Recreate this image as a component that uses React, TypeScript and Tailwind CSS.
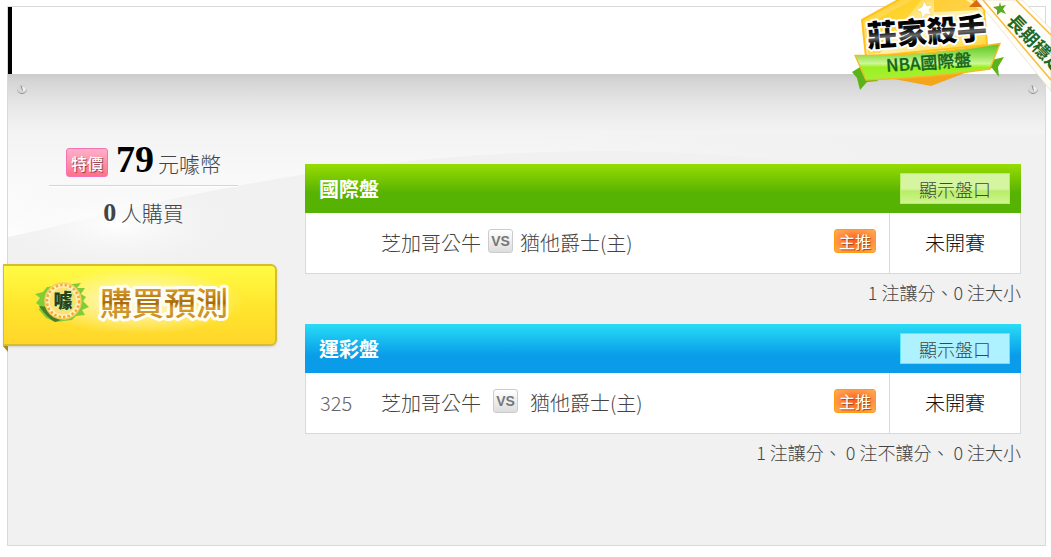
import React from 'react';

interface Match {
  code?: string;
  away: string;
  home: string;
  status: string;
}

interface Board {
  title: string;
  tone: 'green' | 'blue';
  matches: Match[];
  summary: string;
}

const boards: Board[] = [
  {
    title: '國際盤',
    tone: 'green',
    matches: [{ away: '芝加哥公牛', home: '猶他爵士(主)', status: '未開賽' }],
    summary: '1 注讓分、0 注大小',
  },
  {
    title: '運彩盤',
    tone: 'blue',
    matches: [{ code: '325', away: '芝加哥公牛', home: '猶他爵士(主)', status: '未開賽' }],
    summary: '1 注讓分、 0 注不讓分、 0 注大小',
  },
];

const tones = {
  green: {
    header: 'bg-linear-to-b from-[#96dc00] via-[#56b203] via-60% to-[#56b203]',
    button: 'border-[#b9ec68] bg-linear-to-b from-[#d5f5a0] from-50% via-[#b9ee68] via-60% to-[#cdf58c]',
    vs: 'mx-[7px]',
  },
  blue: {
    header: 'bg-linear-to-b from-[#2adcf5] via-[#0a9ce9] via-65% to-[#0a9ce9]',
    button: 'border-[#5eeaf4] bg-[#aef1ff]',
    vs: 'mx-3',
  },
};

function Rivet() {
  return (
    <svg viewBox="0 0 12 12" className="h-3 w-3" aria-hidden="true">
      <circle cx="6" cy="5.500" r="5" fill="#d6d6d6" />
      <path d="M1 5a5 5 0 0 0 10 0c-1 3-2.500 4-5 4s-4-1-5-4z" fill="#8f8f8f" />
      <circle cx="7.500" cy="5" r="2" fill="#efefef" />
      <path d="M5 1.500l1.500 5" stroke="#8a8a8a" strokeWidth="1" />
    </svg>
  );
}

function Gloss() {
  return (
    <svg viewBox="0 0 1037 200" preserveAspectRatio="none" className="absolute inset-x-0 top-0 h-[200px] w-full" aria-hidden="true">
      <defs>
        <linearGradient id="glossFade" gradientUnits="userSpaceOnUse" x1="0" y1="0" x2="0" y2="163">
          <stop offset="0" stopColor="#cbcbcb" />
          <stop offset="0.05" stopColor="#d6d6d6" />
          <stop offset="0.2" stopColor="#e8e8e8" />
          <stop offset="0.35" stopColor="#f3f3f3" />
          <stop offset="0.6" stopColor="#f8f8f8" />
          <stop offset="1" stopColor="#ffffff" />
        </linearGradient>
        <linearGradient id="glossEdge" x1="0" y1="0" x2="1" y2="0">
          <stop offset="0.5" stopColor="#f1f1f1" stopOpacity="0" />
          <stop offset="0.85" stopColor="#f1f1f1" />
        </linearGradient>
        <radialGradient id="glossSpot">
          <stop offset="0" stopColor="#ffffff" />
          <stop offset="1" stopColor="#f1f1f1" stopOpacity="0" />
        </radialGradient>
      </defs>
      <path d="M0 0H1037V130C900 100 760 77 595 77C300 78 100 143 0 163z" fill="url(#glossFade)" />
      <path d="M0 60H1037V135H0z" fill="url(#glossEdge)" />
      <ellipse cx="110" cy="150" rx="130" ry="50" fill="url(#glossSpot)" />
    </svg>
  );
}

function TitleBadge() {
  return (
    <svg viewBox="0 0 201 92" className="absolute top-0 right-0 h-[92px] w-[201px]" role="img" aria-label="莊家殺手 NBA國際盤">
      <defs>
        <linearGradient id="shield" x1="0" y1="0" x2="1" y2="1">
          <stop offset="0" stopColor="#ffbf00" />
          <stop offset="0.2" stopColor="#ffd84a" />
          <stop offset="0.5" stopColor="#fff3b8" />
          <stop offset="1" stopColor="#ffd21f" />
        </linearGradient>
        <linearGradient id="banner" x1="0" y1="0" x2="0" y2="1">
          <stop offset="0" stopColor="#58c322" />
          <stop offset="0.35" stopColor="#9be45c" />
          <stop offset="0.55" stopColor="#cdf797" />
          <stop offset="0.65" stopColor="#9af01e" />
          <stop offset="1" stopColor="#a8f03a" />
        </linearGradient>
        <linearGradient id="ink" x1="0" y1="0" x2="0" y2="1">
          <stop offset="0.3" stopColor="#000000" />
          <stop offset="0.5" stopColor="#1a1a1a" />
          <stop offset="0.6" stopColor="#6a6a6a" />
          <stop offset="0.75" stopColor="#000000" />
        </linearGradient>
      </defs>
      <path d="M2 72l13-8 13 17-11 1-7 8-3-12z" fill="#5bb31a" />
      <path d="M154 57l-12 3-6 10 6-2 7 9-1-10z" fill="#5bb31a" />
      <path d="M12 20L50-1h72l12 10 3 36-121 12z" fill="url(#shield)" stroke="#ffc21c" strokeWidth="2" />
      <path d="M15 26L62 0h9L30 53 18 54z" fill="#ffcf1c" opacity="0.75" />
      <path d="M84 0h32l14 10-46 2z" fill="#ffc928" opacity="0.8" />
      <path d="M33 77L120 71 81 86z" fill="#f3a51c" />
      <path d="M74 1l3 5 6-1-4 5 3 5-6-1-4 4-1-6-5-2 6-3z" fill="#ffffff" stroke="#f7cc60" strokeWidth="0.6" />
      <path d="M5 55.500Q80 56 150 43.500L140 69Q78 78 16 80z" fill="url(#banner)" stroke="#f6ba24" strokeWidth="1.300" />
      <g transform="rotate(-4 76 35)" fontFamily="'Noto Sans CJK TC', sans-serif">
        <text x="17" y="43" fontSize="30" fontWeight="900" fill="url(#ink)" stroke="#ffffff" strokeWidth="4" strokeLinejoin="round" paintOrder="stroke">莊家殺手</text>
        <text x="34" y="69" fontSize="17" fontWeight="500" fill="#14661f" stroke="#14661f" strokeWidth="0.3">NBA國際盤</text>
      </g>
      <path d="M119 7l8-8h4l1 8z" fill="#d96b13" />
      <path d="M127 0H172L201 29V91z" fill="#fffdf6" stroke="#e4dfd2" strokeWidth="0.800" />
      <path d="M133 0L201 80M166 0l35 35" fill="none" stroke="#f7bb3e" strokeWidth="1.500" />
      <path d="M150 2l1 4 5-1-3 4 3 5-5-2-4 3 0-5-4-3 6-1z" fill="#5aa82a" />
      <g transform="translate(156 22) rotate(46)">
        <text x="0" y="0" fontSize="18" fontWeight="700" fontFamily="'Noto Sans CJK TC', sans-serif" fill="#1f6a26">長期穩定</text>
      </g>
    </svg>
  );
}

function CoinLogo() {
  return (
    <svg viewBox="0 0 58 44" className="h-11 w-[58px]" aria-hidden="true">
      <path d="M14 6l34-4-4 5 8 0-4 6 5 3-3 4 6 6-7 3 3 5-9 1-4 4-16 2-10-4-7-8 1-4-4-3 4-5-5-4 8-2z" fill="#82cc3a" />
      <path d="M6 25l9 1q8 10 16 12l-9 3q-8-4-16-16z" fill="#4c7f22" />
      <circle cx="30" cy="20" r="18" fill="#fff3bd" stroke="#f8d057" strokeWidth="1.500" />
      <circle cx="30" cy="20" r="16" fill="none" stroke="#f6a93a" strokeWidth="2.500" strokeDasharray="2.500 2" />
      <circle cx="30" cy="20" r="13.500" fill="#ffe070" />
      <text x="30" y="27" textAnchor="middle" fontSize="19" fontWeight="900" fontFamily="'Noto Sans CJK TC', sans-serif" fill="#26401a" stroke="#d5ef9a" strokeWidth="2" paintOrder="stroke">噱</text>
    </svg>
  );
}

function BuyLabel() {
  return (
    <svg viewBox="0 0 150 52" className="h-[52px] w-[150px]" role="img" aria-label="購買預測">
      <defs>
        <linearGradient id="bronze" x1="0" y1="0" x2="0" y2="1">
          <stop offset="0.2" stopColor="#dda330" />
          <stop offset="0.55" stopColor="#a8690a" />
          <stop offset="0.65" stopColor="#d39a2c" />
          <stop offset="1" stopColor="#c48a20" />
        </linearGradient>
      </defs>
      <text x="9" y="38" fontSize="32" fontWeight="500" fontFamily="'Noto Sans CJK TC', sans-serif" fill="url(#bronze)" stroke="#fffef5" strokeWidth="6" strokeLinejoin="round" paintOrder="stroke">
        購買預測
      </text>
    </svg>
  );
}

function PickTag() {
  return (
    <span className="mb-1 inline-flex h-6 w-[42px] items-center justify-center rounded-[3px] border border-[#ff9c12] bg-radial from-[#ff5a1c] to-[#ffae55] text-base leading-none font-normal text-white text-shadow-[1px_1px_1px_#9b4a12]">
      主推
    </span>
  );
}

function BoardTable({ board }: { board: Board }) {
  const tone = tones[board.tone];
  return (
    <section>
      <div className={`flex h-[49px] items-center justify-between pr-[11px] pl-3.5 ${tone.header}`}>
        <h2 className="text-xl font-bold text-white">{board.title}</h2>
        <button type="button" className={`flex h-[31px] w-[110px] items-center justify-center border text-lg font-light text-[#444] ${tone.button}`}>
          顯示盤口
        </button>
      </div>
      <table className="w-full table-fixed border-separate border-spacing-0 border border-t-0 border-[#d9d9d9] bg-white text-xl font-light text-[#444]">
        <colgroup>
          <col className="w-[75px]" />
          <col />
          <col className="w-[71px]" />
          <col className="w-[131px]" />
        </colgroup>
        <tbody>
          {board.matches.map((match) => (
            <tr key={match.away} className="h-[60px]">
              <td className="pl-3.5 text-[#666]">{match.code}</td>
              <td>
                <div className="flex items-center">
                  <span>{match.away}</span>
                  <span className={`mb-1 flex h-6 w-[25px] items-center justify-center rounded-[3px] border border-[#ccc] bg-linear-to-b from-white to-[#ddd] font-['Liberation_Sans'] text-sm font-bold text-[#777] ${tone.vs}`}>
                    VS
                  </span>
                  <span>{match.home}</span>
                </div>
              </td>
              <td className="pl-4">
                <div className="flex items-center">
                  <PickTag />
                </div>
              </td>
              <td className="border-l border-[#d9d9d9] text-center text-[#111]">{match.status}</td>
            </tr>
          ))}
        </tbody>
      </table>
      <p className="pt-1 text-right text-lg leading-7 font-light text-[#444]">{board.summary}</p>
    </section>
  );
}

export default function App() {
  return (
    <div className="relative overflow-hidden bg-white pt-1.5 pr-[5px] pb-[11px] pl-[7px] font-['Noto_Sans_CJK_TC',sans-serif]">
      <article className="border border-[#d9d9d9] bg-[#f1f1f1]">
        {/* Title bar */}
        <header className="h-[67px] border-l-4 border-black bg-white" />

        <div className="relative pb-[79px]">
          <Gloss />
          <div className="relative flex justify-between px-2 pt-2.5 pr-1.5">
            <Rivet />
            <Rivet />
          </div>

          <div className="relative flex items-start gap-7 pr-6">
            {/* Price and purchase */}
            <aside className="-ml-[5px] w-[274px] shrink-0 pt-10">
              <div className="mr-[39px] ml-[46px]">
                <div className="flex h-[50px] items-center justify-center border-b border-[#d5d5d5] shadow-[0_1px_0_#fff]">
                  <span className="mt-1 mr-2 flex h-[29px] w-[42px] items-center justify-center rounded-[3px] border border-[#f472b6] bg-linear-to-b from-[#ffafca] to-[#ff7188] text-base font-medium text-white text-shadow-[1px_1px_1px_#8e3b4d]">
                    特價
                  </span>
                  <span className="flex items-baseline gap-1 pb-1">
                    <strong className="font-['Liberation_Serif'] text-[38px] leading-none text-black">79</strong>
                    <span className="text-[21px] leading-7 font-light text-[#444]">元噱幣</span>
                  </span>
                </div>
                <p className="pt-2.5 text-center text-[21px] leading-8 font-light text-[#444]">
                  <strong className="font-['Liberation_Serif'] text-[26px] font-bold">0</strong> 人購買
                </p>
              </div>
              <button
                type="button"
                className="mt-[35px] flex h-[82px] w-full items-center rounded-r-md border-2 border-l border-[#d6bd2e] bg-[radial-gradient(ellipse_at_50%_45%,#fffde0_0%,#fffde000_55%),linear-gradient(#fffb45,#ffe62e_50%,#ffd62a)] pb-1 pl-[29px] shadow-sm"
              >
                <CoinLogo />
                <BuyLabel />
              </button>
              <svg viewBox="0 0 5 6" className="h-1.5 w-[5px]" aria-hidden="true">
                <path d="M0 0h5v6z" fill="#a98a14" />
              </svg>
            </aside>

            {/* Boards */}
            <div className="min-w-0 flex-1 space-y-[18px] pt-[68px]">
              {boards.map((board) => (
                <BoardTable key={board.title} board={board} />
              ))}
            </div>
          </div>
        </div>
      </article>
      <TitleBadge />
    </div>
  );
}
